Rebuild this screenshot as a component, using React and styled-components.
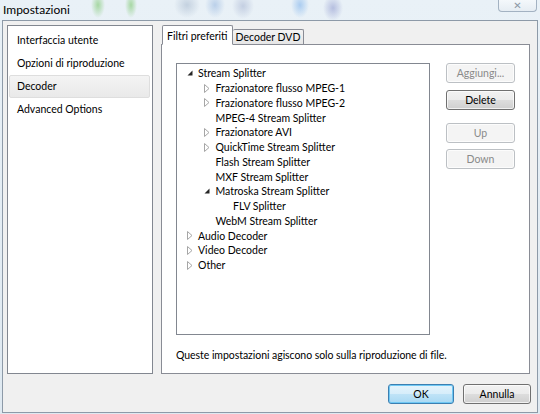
import React from "react"
import styled, { createGlobalStyle } from "styled-components"

const GlobalStyle = createGlobalStyle`
  html, body {
    margin: 0;
    padding: 0;
  }
  body {
    width: 540px;
    height: 414px;
    overflow: hidden;
    font-family: Lato, "Open Sans", sans-serif;
    font-size: 10.5px;
    color: #000;
  }
`

const Frame = styled.div`
  width: 540px;
  height: 414px;
  display: flex;
  flex-direction: column;
  background:
    radial-gradient(ellipse 7px 13px at 98px 5px, rgba(100, 190, 80, 0.5), transparent),
    radial-gradient(ellipse 6px 13px at 131px 5px, rgba(100, 190, 80, 0.5), transparent),
    radial-gradient(ellipse 13px 13px at 187px 5px, rgba(150, 170, 195, 0.45), transparent),
    radial-gradient(ellipse 10px 13px at 215px 5px, rgba(140, 175, 220, 0.5), transparent),
    radial-gradient(ellipse 11px 13px at 243px 6px, rgba(150, 165, 200, 0.45), transparent),
    radial-gradient(ellipse 9px 13px at 300px 5px, rgba(120, 175, 235, 0.55), transparent),
    radial-gradient(ellipse 10px 13px at 333px 8px, rgba(130, 140, 200, 0.5), transparent),
    linear-gradient(#e9f1f7, #dfe9f1);
`

const TitleBar = styled.div`
  height: 20px;
  display: flex;
  justify-content: space-between;
  align-items: flex-start;
`

const Title = styled.span`
  padding: 2px 0 0 3px;
  font-size: 12px;
  line-height: 15px;
`

const CloseButton = styled.div`
  width: 37px;
  height: 11px;
  margin-right: 3px;
  border: 1px solid #a3b2c2;
  border-top: none;
  border-radius: 0 0 4px 4px;
  background: linear-gradient(#f4f8fb, #e6edf3);
  display: flex;
  justify-content: center;
  align-items: flex-end;
  color: #8c98a6;
  font-family: "DejaVu Sans", sans-serif;
  font-size: 10px;
  line-height: 10px;
`

const Client = styled.div`
  flex: 1;
  margin: 0 2px 1px 2px;
  border: 1px solid #8d9aa8;
  background: #f0f0f0;
  display: grid;
  grid-template-columns: 146px 1fr;
  grid-template-rows: 349px auto;
  column-gap: 8px;
  row-gap: 10px;
  padding: 4px 8px 8px 4px;
`

const NavList = styled.div`
  border: 1px solid #828790;
  background: #fff;
  padding: 3px 2px 0 1px;
`

const NavItem = styled.div`
  height: 21px;
  line-height: 21px;
  padding-left: 7px;
  border: 1px solid ${(p) => (p.selected ? "#dedede" : "transparent")};
  border-radius: 2px;
  background: ${(p) => (p.selected ? "linear-gradient(#f4f4f4, #e9e9e9)" : "transparent")};
`

const RightColumn = styled.div`
  display: flex;
  flex-direction: column;
`

const TabStrip = styled.div`
  display: flex;
  align-items: flex-end;
  height: 19px;
  padding-left: 1px;
  position: relative;
  z-index: 1;
`

const Tab = styled.div`
  box-sizing: border-box;
  height: ${(p) => (p.active ? "20px" : "15px")};
  line-height: 14px;
  padding: ${(p) => (p.active ? "3px 4px 0" : "0 3px")};
  border: 1px solid #898c95;
  border-bottom: ${(p) => (p.active ? "1px solid #fff" : "none")};
  border-left: ${(p) => (p.active ? "1px solid #898c95" : "none")};
  border-radius: 2px 2px 0 0;
  margin-bottom: ${(p) => (p.active ? "-1px" : "0")};
  background: ${(p) => (p.active ? "#fff" : "linear-gradient(#f3f3f3, #e6e6e6)")};
  white-space: nowrap;
`

const Panel = styled.div`
  flex: 1;
  border: 1px solid #898c95;
  background: #fff;
  padding: 18px 14px 0 14px;
`

const PanelBody = styled.div`
  display: grid;
  grid-template-columns: 254px 69px;
  column-gap: 16px;
  align-items: start;
`

const TreeBox = styled.div`
  height: 272px;
  box-sizing: border-box;
  border: 1px solid #828790;
  padding-top: 2px;
`

const TreeRow = styled.div`
  display: flex;
  align-items: center;
  height: 14.75px;
  padding-left: ${(p) => 6 + p.level * 17.5}px;
  white-space: nowrap;
`

const Expander = styled.span`
  width: 13px;
  height: 14px;
  display: flex;
  align-items: center;
  justify-content: center;
  flex-shrink: 0;
  margin-right: 2px;
`

const SideButtons = styled.div`
  display: flex;
  flex-direction: column;
`

const Button = styled.div`
  height: 20px;
  box-sizing: border-box;
  margin-top: ${(p) => p.gap || 0}px;
  border: 1px solid ${(p) => (p.disabled ? "#bcc0c4" : p.primary ? "#3c7fb1" : "#707070")};
  border-radius: 3px;
  background: ${(p) =>
    p.disabled
      ? "#f4f4f4"
      : p.primary
      ? "linear-gradient(#e5f4fc 0%, #d6edfa 50%, #bfe3f7 51%, #a9d9f3 100%)"
      : "linear-gradient(#f2f2f2 0%, #ebebeb 50%, #dddddd 51%, #cfcfcf 100%)"};
  box-shadow: ${(p) => (p.primary ? "inset 0 0 0 1px #6fc8f4" : "inset 0 0 0 1px rgba(255,255,255,0.7)")};
  color: ${(p) => (p.disabled ? "#8a8a8a" : "#000")};
  display: flex;
  align-items: center;
  justify-content: center;
  width: ${(p) => (p.width ? `${p.width}px` : "auto")};
`

const Note = styled.div`
  margin-top: 13px;
  line-height: 14px;
  letter-spacing: -0.05px;
`

const Footer = styled.div`
  grid-column: 1 / -1;
  display: flex;
  justify-content: flex-end;
  gap: 9px;
  margin-right: -1px;
`

const OpenArrow = () => (
  <svg width="6" height="6" viewBox="0 0 6 6">
    <path d="M5.5 0.5 L5.5 5.5 L0.5 5.5 Z" fill="#262626" />
  </svg>
)

const ClosedArrow = () => (
  <svg width="6" height="9" viewBox="0 0 6 9">
    <path d="M0.5 0.5 L5 4.5 L0.5 8.5 Z" fill="#fff" stroke="#a6a6a6" strokeWidth="1" />
  </svg>
)

const tree = [
  { level: 0, state: "open", label: "Stream Splitter" },
  { level: 1, state: "closed", label: "Frazionatore flusso MPEG-1" },
  { level: 1, state: "closed", label: "Frazionatore flusso MPEG-2" },
  { level: 1, label: "MPEG-4 Stream Splitter" },
  { level: 1, state: "closed", label: "Frazionatore AVI" },
  { level: 1, state: "closed", label: "QuickTime Stream Splitter" },
  { level: 1, label: "Flash Stream Splitter" },
  { level: 1, label: "MXF Stream Splitter" },
  { level: 1, state: "open", label: "Matroska Stream Splitter" },
  { level: 2, label: "FLV Splitter" },
  { level: 1, label: "WebM Stream Splitter" },
  { level: 0, state: "closed", label: "Audio Decoder" },
  { level: 0, state: "closed", label: "Video Decoder" },
  { level: 0, state: "closed", label: "Other" },
]

const pages = ["Interfaccia utente", "Opzioni di riproduzione", "Decoder", "Advanced Options"]

export default function App() {
  return (
    <Frame>
      <GlobalStyle />
      <TitleBar>
        <Title>Impostazioni</Title>
        <CloseButton>✕</CloseButton>
      </TitleBar>
      <Client>
        <NavList>
          {pages.map((p) => (
            <NavItem key={p} selected={p === "Decoder"}>
              {p}
            </NavItem>
          ))}
        </NavList>
        <RightColumn>
          <TabStrip>
            <Tab active>Filtri preferiti</Tab>
            <Tab>Decoder DVD</Tab>
          </TabStrip>
          <Panel>
            <PanelBody>
              <TreeBox>
                {tree.map((n) => (
                  <TreeRow key={n.label} level={n.level}>
                    <Expander>
                      {n.state === "open" && <OpenArrow />}
                      {n.state === "closed" && <ClosedArrow />}
                    </Expander>
                    {n.label}
                  </TreeRow>
                ))}
              </TreeBox>
              <SideButtons>
                <Button disabled>Aggiungi...</Button>
                <Button gap={7}>Delete</Button>
                <Button disabled gap={13}>Up</Button>
                <Button disabled gap={6}>Down</Button>
              </SideButtons>
            </PanelBody>
            <Note>Queste impostazioni agiscono solo sulla riproduzione di file.</Note>
          </Panel>
        </RightColumn>
        <Footer>
          <Button primary width={66}>OK</Button>
          <Button width={68}>Annulla</Button>
        </Footer>
      </Client>
    </Frame>
  )
}
